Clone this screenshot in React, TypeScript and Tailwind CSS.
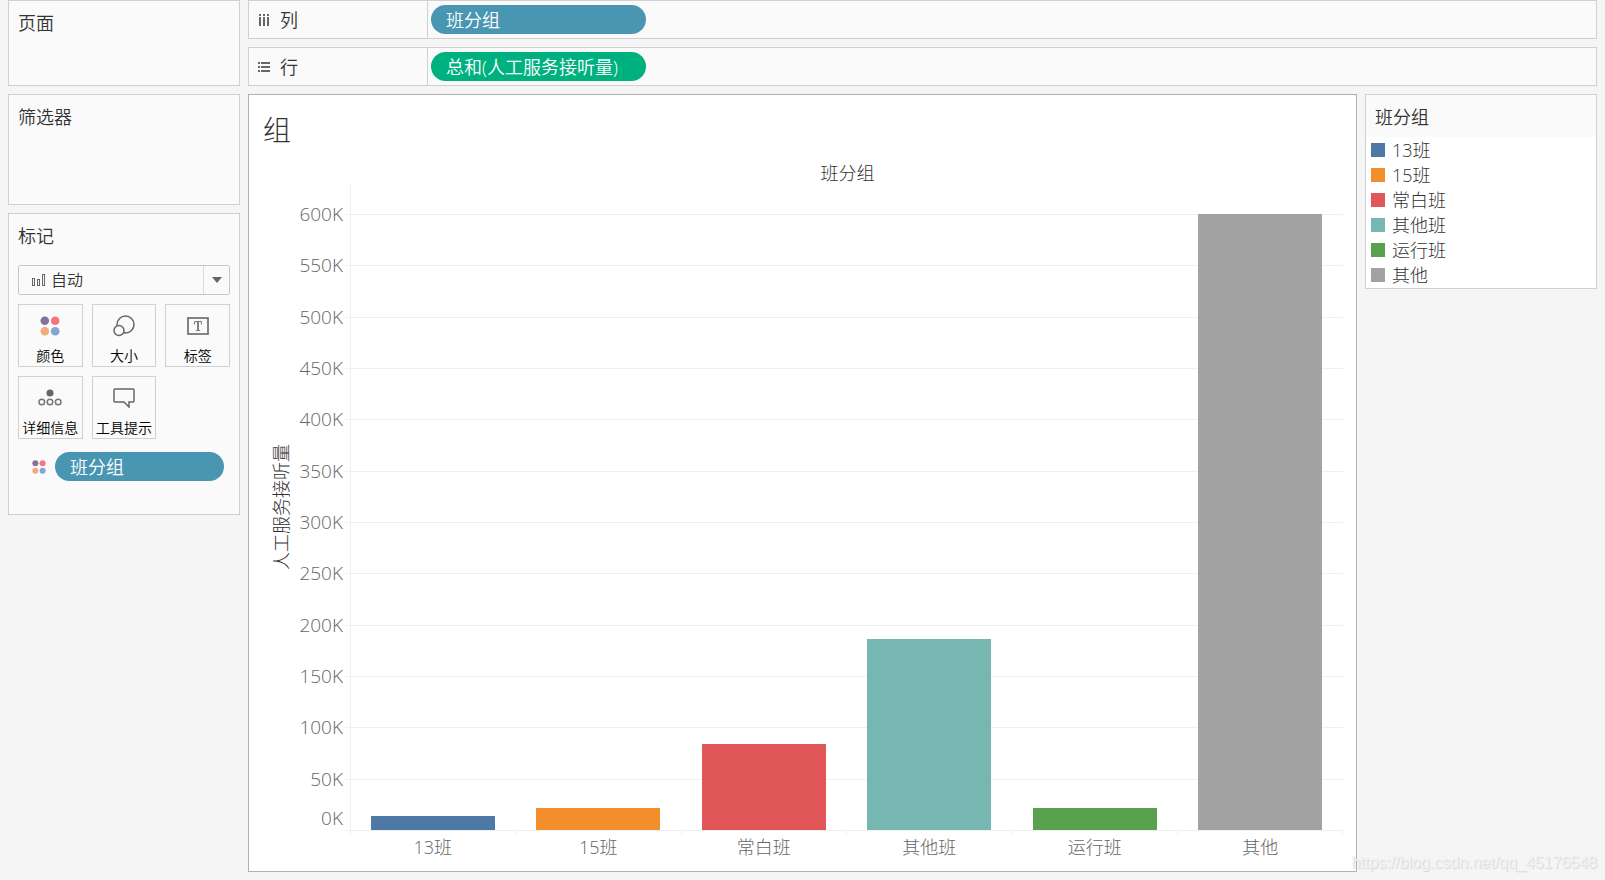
import type { ReactNode } from "react";

type Group = {
  name: string;
  value: number; // thousands of calls
  color: string;
};

const MAX = 600;
const STEP = 50;

const groups: Group[] = [
  { name: "13班", value: 14, color: "#4e79a7" },
  { name: "15班", value: 21.5, color: "#f28e2b" },
  { name: "常白班", value: 84, color: "#e15759" },
  { name: "其他班", value: 186, color: "#76b7b2" },
  { name: "运行班", value: 21.5, color: "#59a14f" },
  { name: "其他", value: 600, color: "#a2a2a2" },
];

// 600, 550 ... 50 — the zero label is handled on its own
const ticks = Array.from({ length: MAX / STEP }, (_, i) => MAX - i * STEP);

function ColorDots({ className }: { className: string }) {
  return (
    <svg viewBox="0 0 20 20" className={className} aria-hidden="true">
      <circle cx="4.8" cy="4.8" r="4.3" fill="#86709a" />
      <circle cx="15.2" cy="4.8" r="4.3" fill="#f87482" />
      <circle cx="4.8" cy="15.2" r="4.3" fill="#f2a97f" />
      <circle cx="15.2" cy="15.2" r="4.3" fill="#82a6cd" />
    </svg>
  );
}

function SizeIcon() {
  return (
    <svg viewBox="0 0 22 22" className="w-[22px] h-[22px]" fill="none" stroke="#666" strokeWidth="1.5" aria-hidden="true">
      <circle cx="12.5" cy="9.5" r="8.5" />
      <circle cx="6" cy="15.5" r="5" fill="#fafafa" />
    </svg>
  );
}

function LabelIcon() {
  return (
    <svg viewBox="0 0 22 18" className="w-[22px] h-[18px]" fill="none" aria-hidden="true">
      <rect x="1" y="1" width="20" height="16" stroke="#666" strokeWidth="1.6" />
      <path d="M7.6 7.4V4.6h6.8v2.8M8.8 13.6h4.4" stroke="#777" strokeWidth="1" />
      <path d="M11 4.6v9" stroke="#777" strokeWidth="1.8" />
    </svg>
  );
}

function DetailIcon() {
  return (
    <svg viewBox="0 0 24 17" className="w-6 h-[17px]" fill="none" stroke="#777" strokeWidth="1.5" aria-hidden="true">
      <circle cx="12" cy="4" r="3.5" fill="#666" stroke="none" />
      <circle cx="3.8" cy="13" r="2.8" />
      <circle cx="12" cy="13" r="2.8" />
      <circle cx="20.2" cy="13" r="2.8" />
    </svg>
  );
}

function TooltipIcon() {
  return (
    <svg viewBox="0 0 22 20" className="w-[22px] h-5" fill="none" stroke="#666" strokeWidth="1.5" aria-hidden="true">
      <path d="M2 1h18a1 1 0 0 1 1 1v11a1 1 0 0 1-1 1h-4v5l-5-5H2a1 1 0 0 1-1-1V2a1 1 0 0 1 1-1z" />
    </svg>
  );
}

function ColumnsIcon() {
  return (
    <svg viewBox="0 0 12 12" className="w-3 h-3" fill="#666" shapeRendering="crispEdges" aria-hidden="true">
      {[1, 5, 9].map((x) => (
        <g key={x}>
          <rect x={x} y="0" width="2" height="2" />
          <rect x={x} y="3" width="2" height="9" />
        </g>
      ))}
    </svg>
  );
}

function RowsIcon() {
  return (
    <svg viewBox="0 0 12 10" className="w-3 h-[10px]" fill="#666" shapeRendering="crispEdges" aria-hidden="true">
      {[0, 4, 8].map((y) => (
        <g key={y}>
          <rect x="0" y={y} width="2" height="2" />
          <rect x="3" y={y} width="9" height="2" />
        </g>
      ))}
    </svg>
  );
}

function Card({ title, className = "", children }: { title: string; className?: string; children?: ReactNode }) {
  return (
    <section className={`border border-[#d0d0d0] bg-[#fafafa] px-[9px] ${className}`}>
      <h2 className="pt-2 text-lg leading-7 text-[#333]">{title}</h2>
      {children}
    </section>
  );
}

function Shelf({ icon, label, children }: { icon: ReactNode; label: string; children: ReactNode }) {
  return (
    <section className="flex h-[39px] border border-[#d0d0d0] bg-[#fafafa]">
      <h2 className="flex w-[179px] items-center gap-[10px] border-r border-[#d0d0d0] pl-[9px] text-lg leading-7 text-[#333]">
        {icon}
        {label}
      </h2>
      <div className="flex items-center px-[3px]">{children}</div>
    </section>
  );
}

const markButtons = [
  { label: "颜色", icon: <ColorDots className="w-5 h-5" /> },
  { label: "大小", icon: <SizeIcon /> },
  { label: "标签", icon: <LabelIcon /> },
  { label: "详细信息", icon: <DetailIcon /> },
  { label: "工具提示", icon: <TooltipIcon /> },
];

function MarksCard() {
  return (
    <Card title="标记" className="h-[302px]">
      <div className="relative mt-[15px]">
        <svg viewBox="0 0 14 13" className="pointer-events-none absolute left-[13px] top-[9px] h-[13px] w-[14px]" fill="none" stroke="#666" aria-hidden="true">
          <rect x="1.5" y="4.5" width="2" height="7" />
          <rect x="6.5" y="5.5" width="2" height="6" />
          <rect x="11.5" y="0.5" width="2" height="11" />
        </svg>
        <select
          aria-label="标记类型"
          className="block h-[30px] w-full appearance-none rounded-xs border border-[#c8c8c8] bg-[#fafafa] pl-8 text-base leading-7 text-[#333]"
        >
          <option>自动</option>
          <option>条形图</option>
          <option>线</option>
        </select>
        <span className="pointer-events-none absolute inset-y-px right-px flex w-[26px] items-center justify-center border-l border-[#dcdcdc]">
          <svg viewBox="0 0 10 6" className="h-[6px] w-[10px]" aria-hidden="true">
            <path d="M0 0h10L5 6z" fill="#666" />
          </svg>
        </span>
      </div>
      <div className="mt-[9px] grid grid-cols-3 gap-[9px]">
        {markButtons.map((b) => (
          <button
            key={b.label}
            className="flex h-[63px] flex-col items-center border border-[#d0d0d0] bg-[#fafafa] text-sm leading-5 whitespace-nowrap text-black"
          >
            <span className="flex h-[41px] items-center justify-center">{b.icon}</span>
            {b.label}
          </button>
        ))}
      </div>
      <div className="mt-[13px] flex items-center gap-[9px] pr-[6px] pl-[14px]">
        <ColorDots className="h-[14px] w-[14px]" />
        <button className="h-[29px] flex-1 rounded-full bg-[#4996b2] px-[15px] text-left text-lg leading-7 text-white">班分组</button>
      </div>
    </Card>
  );
}

function BarChart() {
  return (
    <section className="flex flex-1 flex-col border border-[#b0b0b0] bg-white pr-[13px] pb-2 pl-[14px] font-light">
      <h1 className="pt-4 text-[28px] leading-[38px] text-[#333]">组</h1>
      <div className="flex flex-1 text-lg leading-6 text-[#666]">
        <div className="mt-[41px] mb-[39px] flex w-9 items-center pl-[6px]">
          <span className="rotate-180 text-[#333] [text-orientation:sideways] [writing-mode:vertical-rl]">人工服务接听量</span>
        </div>
        <div className="mt-[65px] mb-[33px] flex w-[46px] flex-col pr-[2px] text-right text-[19px]">
          {ticks.map((t, i) => (
            <div key={t} className="flex h-0 flex-1 flex-col justify-between">
              <span className="-mt-3">{t}K</span>
              {i === ticks.length - 1 && <span>0K</span>}
            </div>
          ))}
        </div>
        <div className="flex flex-1 flex-col">
          <h2 className="pt-3 pl-[7px] text-center text-lg leading-6 text-[#333]">班分组</h2>
          <div className="ml-[5px] h-[29px] border-l border-[#f0f0f0]" />
          <div className="relative flex flex-1 border-b border-[#f0f0f0] pl-[5px]">
            <div className="absolute inset-0 flex flex-col">
              {ticks.map((t) => (
                <div key={t} className="flex-1 border-t border-[#f0f0f0]" />
              ))}
            </div>
            <div className="relative flex flex-1 items-end">
              <div className="absolute inset-y-0 left-0 w-px bg-[#f0f0f0]" />
              {groups.map((g) => (
                <div key={g.name} className="flex h-full flex-1 items-end justify-center">
                  <div className="w-3/4" style={{ height: `${(g.value / MAX) * 100}%`, backgroundColor: g.color }} />
                </div>
              ))}
            </div>
          </div>
          {/* category ticks, closed off at the right end, with the names under them */}
          <div className="ml-[5px] flex h-1 border-r border-[#f0f0f0]">
            {groups.map((g) => (
              <div key={g.name} className="flex-1 border-l border-[#f0f0f0]" />
            ))}
          </div>
          <div className="flex h-7 pl-[5px] text-center">
            {groups.map((g) => (
              <span key={g.name} className="flex-1">
                {g.name}
              </span>
            ))}
          </div>
        </div>
      </div>
    </section>
  );
}

function Legend() {
  return (
    <section className="w-[232px] shrink-0 self-start border border-[#d0d0d0] bg-white pb-px">
      <h2 className="bg-[#fafafa] px-[9px] pt-2 pb-[6px] text-lg leading-7 text-[#333]">班分组</h2>
      <ul className="pl-[5px] font-light">
        {groups.map((g) => (
          <li key={g.name} className="flex h-[25px] items-center gap-[7px] text-lg leading-6 text-[#333]">
            <span className="h-[14px] w-[14px]" style={{ backgroundColor: g.color }} />
            {g.name}
          </li>
        ))}
      </ul>
    </section>
  );
}

export default function App() {
  return (
    <div className="relative flex min-h-screen gap-2 bg-[#f5f5f5] px-2 pb-2 font-['Open_Sans','Noto_Sans_CJK_SC',sans-serif] font-[350]">
      <aside className="flex w-[232px] shrink-0 flex-col gap-2">
        <Card title="页面" className="h-[86px]" />
        <Card title="筛选器" className="h-[111px]" />
        <MarksCard />
      </aside>
      <main className="flex flex-1 flex-col gap-2">
        <Shelf icon={<ColumnsIcon />} label="列">
          <button className="h-[29px] w-[215px] rounded-full bg-[#4996b2] px-[15px] text-left text-lg leading-7 text-white">班分组</button>
        </Shelf>
        <Shelf icon={<RowsIcon />} label="行">
          <button className="h-[29px] w-[215px] rounded-full bg-[#00b180] px-[15px] text-left text-lg leading-7 whitespace-nowrap text-white">
            总和(人工服务接听量)
          </button>
        </Shelf>
        <div className="flex flex-1 gap-2">
          <BarChart />
          <Legend />
        </div>
      </main>
      <p className="absolute right-2 bottom-[5px] font-['Liberation_Sans',sans-serif] text-base font-normal leading-6 text-[#f2f2f2] [text-shadow:1px_1px_1px_#d4d4d4]">
        https://blog.csdn.net/qq_45176548
      </p>
    </div>
  );
}
